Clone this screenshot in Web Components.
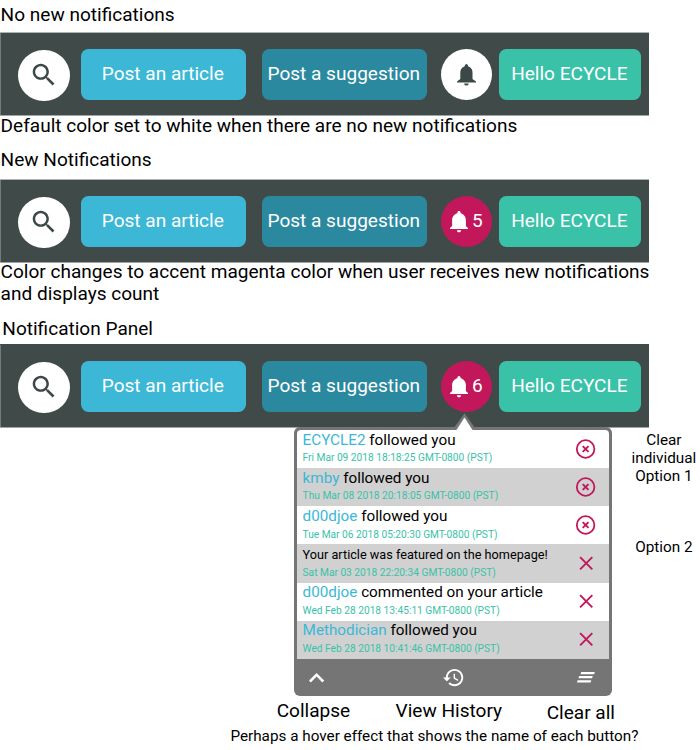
<!DOCTYPE html>
<html lang="en">
<head>
<meta charset="utf-8">
<title>Notification states</title>
<style>
html,body{margin:0;padding:0;background:#fff}
body{width:700px;height:750px;overflow:hidden;font-family:Roboto,"Liberation Sans",sans-serif;color:#000}
</style>
</head>
<body>
<notification-spec></notification-spec>
<script>
const define = (name, html, setup) => {
  const tpl = document.createElement('template');
  tpl.innerHTML = html;
  customElements.define(name, class extends HTMLElement {
    connectedCallback() {
      if (this.shadowRoot) return;
      const root = this.attachShadow({ mode: 'open' });
      root.append(tpl.content.cloneNode(true));
      if (setup) setup(this, root);
    }
  });
};

const ICONS = {
  search: [24, 24, '<path fill="currentColor" d="M15.5 14h-.79l-.28-.27C15.41 12.59 16 11.11 16 9.5 16 5.91 13.09 3 9.5 3S3 5.91 3 9.5 5.91 16 9.5 16c1.61 0 3.09-.59 4.23-1.57l.27.28v.79l5 4.99L20.49 19l-4.99-5zm-6 0C7.01 14 5 11.99 5 9.5S7.01 5 9.5 5 14 7.01 14 9.5 11.99 14 9.5 14z"/>'],
  bell: [17, 20, '<path transform="translate(-3 -2)" fill="currentColor" d="M11.5 22c1.1 0 2-.9 2-2h-4c0 1.1.9 2 2 2zm6.5-6v-5.5c0-3.07-2.13-5.64-5-6.32V3.5c0-.83-.67-1.5-1.5-1.5S10 2.67 10 3.5v.68c-2.87.68-5 3.25-5 6.32V16l-2 2v1h17v-1l-2-2z"/>'],
  'bell-narrow': [19, 21.6, '<path fill="currentColor" d="M9.4 0C8.5 0 7.9 1 7.7 2.2L5.5 3.6Q3.3 5.2 3.3 8v7L0 17.5v.9h19v-.9L15.5 15V8q0-2.8-2.2-4.4L11.1 2.2C10.9 1 10.3 0 9.4 0zM7 19.4h4.8q-.5 2.2-2.4 2.2T7 19.4z"/>'],
  'cancel-circle': [20, 20, '<g fill="none" stroke="currentColor"><circle cx="9.6" cy="10" r="8.8" stroke-width="1.8"/><path d="M6.7 7.1l5.8 5.8M12.5 7.1l-5.8 5.8" stroke-width="2"/></g>'],
  cancel: [20, 20, '<path fill="none" stroke="currentColor" stroke-width="1.9" d="M4.1 4.1l12.2 12.2M16.3 4.1L4.1 16.3"/>'],
  up: [12, 7.41, '<path transform="translate(-6 -8)" fill="currentColor" d="M12 8l-6 6 1.41 1.41L12 10.83l4.59 4.58L18 14z"/>'],
  history: [24, 24, '<path fill="currentColor" d="M13 3c-4.97 0-9 4.03-9 9H1l3.89 3.89.07.14L9 12H6c0-3.87 3.13-7 7-7s7 3.13 7 7-3.13 7-7 7c-1.93 0-3.68-.79-4.94-2.06l-1.42 1.42C8.27 19.99 10.51 21 13 21c4.97 0 9-4.03 9-9s-4.03-9-9-9zm-1 5v5l4.28 2.54.72-1.21-3.5-2.08V8H12z"/>'],
  'clear-all': [18, 10.4, '<path fill="currentColor" d="M4.2 0H18l-.6 2.2H3.6zM2.1 4.1h13.8l-.6 2.2H1.5zM.6 8.2h13.8l-.6 2.2H0z"/>']
};
define('ui-icon', '<style>:host{display:block;flex:none}svg{display:block;width:100%;height:100%;overflow:visible}</style>',
  (el, root) => {
    const [w, h, art] = ICONS[el.getAttribute('name')];
    root.innerHTML += `<svg viewBox="0 0 ${w} ${h}" preserveAspectRatio="none">${art}</svg>`;
  });

define('spec-text', `<style>
:host{display:block;white-space:nowrap;font-size:19.06px;line-height:22px}
</style><slot></slot>`);

define('bar-button', `<style>
:host{display:flex;flex:none;align-items:center;justify-content:center;box-sizing:border-box;height:51px;border-radius:7.5px;
padding-bottom:var(--lift,1px);color:#fff;font-size:19.06px;line-height:22px;white-space:nowrap}
</style><slot></slot>`);

define('round-button', `<style>
:host{display:flex;flex:none;align-items:center;justify-content:center;box-sizing:border-box;width:51.4px;height:51.4px;border-radius:50%;
background:#fff;color:#3c4747;font-size:19.06px;line-height:22px}
</style><slot></slot>`);

define('nav-bar', `<style>
:host{display:flex;box-sizing:border-box;width:649px;height:84px;padding:17px 0 0 18px;background:#3f4a49;
box-shadow:inset 0 1px var(--top-edge,#aeb3b3),inset 0 -1px var(--bottom-edge,#9fa5a4),inset 1px 0 #737b7b}
.search{margin:1px 11.2px 0 .2px}
.search ui-icon{width:29.8px;height:29.8px;margin:-1px 0 0 0}
.article{width:165px;margin-right:16.3px;padding-right:1px;background:#3cb8d6}
.suggestion{width:165.4px;margin-right:13.3px;padding-right:2px;background:#2b899f}
.bell{margin-right:7.1px;width:51px;height:51px}
.bell.new{background:#c2185b;color:#fff}
.bell.new ui-icon{width:18px;height:21.3px;margin-right:4px}
.idle ui-icon{width:19px;height:21.6px}
.count{padding-bottom:1px}
.hello{width:142px;padding-right:1px;background:#39c2a8}
</style>
<round-button class="search"><ui-icon name="search"></ui-icon></round-button>
<bar-button class="article">Post an article</bar-button>
<bar-button class="suggestion">Post a suggestion</bar-button>
<round-button class="bell"></round-button>
<bar-button class="hello">Hello ECYCLE</bar-button>`,
  (el, root) => {
    const bell = root.querySelector('.bell'), n = el.getAttribute('count');
    bell.classList.add(n ? 'new' : 'idle');
    bell.innerHTML = n ? `<ui-icon name="bell"></ui-icon><span class="count">${n}</span>` : '<ui-icon name="bell-narrow"></ui-icon>';
  });

define('notification-row', `<style>
:host{display:flex;justify-content:space-between;align-items:center;box-sizing:border-box;height:38.13px;padding:0 12.8px 0 5.6px;white-space:nowrap}
:host([shaded]){background:#d1d1d1}
.text{padding-bottom:2px}
.title{font-size:15.26px;line-height:18px}
:host([small]) .title{font-size:12.7px;padding-top:1px;margin-bottom:-1px}
.date{font-size:10.18px;line-height:14px;color:#39c2a8;margin-top:2.5px}
b{font-weight:400;color:#3cb8d6}
ui-icon{width:20px;height:20px;color:#c2185b;margin-top:-.5px}
</style><div class="text"><div class="title"><b></b><slot></slot></div><div class="date"></div></div>`,
  (el, root) => {
    root.querySelector('b').textContent = el.getAttribute('user') || '';
    root.querySelector('.date').textContent = el.getAttribute('date');
    const icon = document.createElement('ui-icon');
    icon.setAttribute('name', el.getAttribute('icon'));
    root.append(icon);
  });

define('notification-panel', `<style>
:host{display:block;position:relative;box-sizing:border-box;width:317.5px;height:269px;padding:2.6px 2.8px 0;background:#757575;border-radius:6px}
.rows{background:#fff;border-radius:4px 4px 0 0}
.caret{position:absolute;left:158.5px;top:-14px;width:23px;height:18px}
footer{display:flex;justify-content:space-between;align-items:center;height:37px;padding:0 14.5px 0 12px;color:#fff}
.up{width:15.2px;height:9.4px}
.history{width:23.2px;height:23.2px;margin-left:6px}
.clear{width:17.8px;height:10.4px}
</style>
<div class="rows"><slot></slot></div>
<svg class="caret" viewBox="0 0 23 18"><path fill="#757575" d="M11.5.2L22.8 16H.2z"/><path fill="#fff" d="M11.5 4.4L19.6 17H3.4z"/></svg>
<footer><ui-icon class="up" name="up"></ui-icon><ui-icon class="history" name="history"></ui-icon><ui-icon class="clear" name="clear-all"></ui-icon></footer>`);

define('side-notes', `<style>
:host{display:block;width:68px;font-size:15.3px;line-height:17.9px;text-align:center;white-space:nowrap}
p{margin:0}.second{margin-top:52.8px}
</style><p>Clear<br>individual<br>Option 1</p><p class="second">Option 2</p>`);

define('notification-spec', `<style>
:host{display:flex;flex-direction:column;height:750px;padding-top:4px;box-sizing:border-box}
spec-text{padding-left:.6px}
.work{display:flex;align-items:flex-start;height:269px;margin-top:-.6px;padding-left:294.2px}
side-notes{margin:4.7px 0 0 18.2px}
.labels{display:flex;height:27px;margin-top:3.4px;padding-left:276.1px}
.labels .history{margin-left:44.8px}
.labels .clear{margin:2px 0 0 44px}
</style>
<spec-text>No new notifications</spec-text>
<nav-bar style="margin-top:6px"></nav-bar>
<spec-text style="margin-top:-1px">Default color set to white when there are no new notifications</spec-text>
<spec-text style="margin-top:12px">New Notifications</spec-text>
<nav-bar count="5" style="margin-top:8px"></nav-bar>
<spec-text style="margin-top:-3px;line-height:22px;padding-top:1px">Color changes to accent magenta color when user receives new notifications<br>and displays count</spec-text>
<spec-text style="margin-top:13px;padding-left:2.3px">Notification Panel</spec-text>
<nav-bar count="6" style="margin-top:4px;--top-edge:#3f4a49;--lift:2px"></nav-bar>
<div class="work">
<notification-panel>
<notification-row user="ECYCLE2" date="Fri Mar 09 2018 18:18:25 GMT-0800 (PST)" icon="cancel-circle"> followed you</notification-row>
<notification-row shaded user="kmby" date="Thu Mar 08 2018 20:18:05 GMT-0800 (PST)" icon="cancel-circle"> followed you</notification-row>
<notification-row user="d00djoe" date="Tue Mar 06 2018 05:20:30 GMT-0800 (PST)" icon="cancel-circle"> followed you</notification-row>
<notification-row shaded small date="Sat Mar 03 2018 22:20:34 GMT-0800 (PST)" icon="cancel">Your article was featured on the homepage!</notification-row>
<notification-row user="d00djoe" date="Wed Feb 28 2018 13:45:11 GMT-0800 (PST)" icon="cancel"> commented on your article</notification-row>
<notification-row shaded user="Methodician" date="Wed Feb 28 2018 10:41:46 GMT-0800 (PST)" icon="cancel"> followed you</notification-row>
</notification-panel>
<side-notes></side-notes>
</div>
<div class="labels"><spec-text>Collapse</spec-text><spec-text class="history">View History</spec-text><spec-text class="clear">Clear all</spec-text></div>
<spec-text style="font-size:15.28px;line-height:18px;margin-top:-.3px;padding-left:230.4px">Perhaps a hover effect that shows the name of each button?</spec-text>`);
</script>
</body>
</html>
